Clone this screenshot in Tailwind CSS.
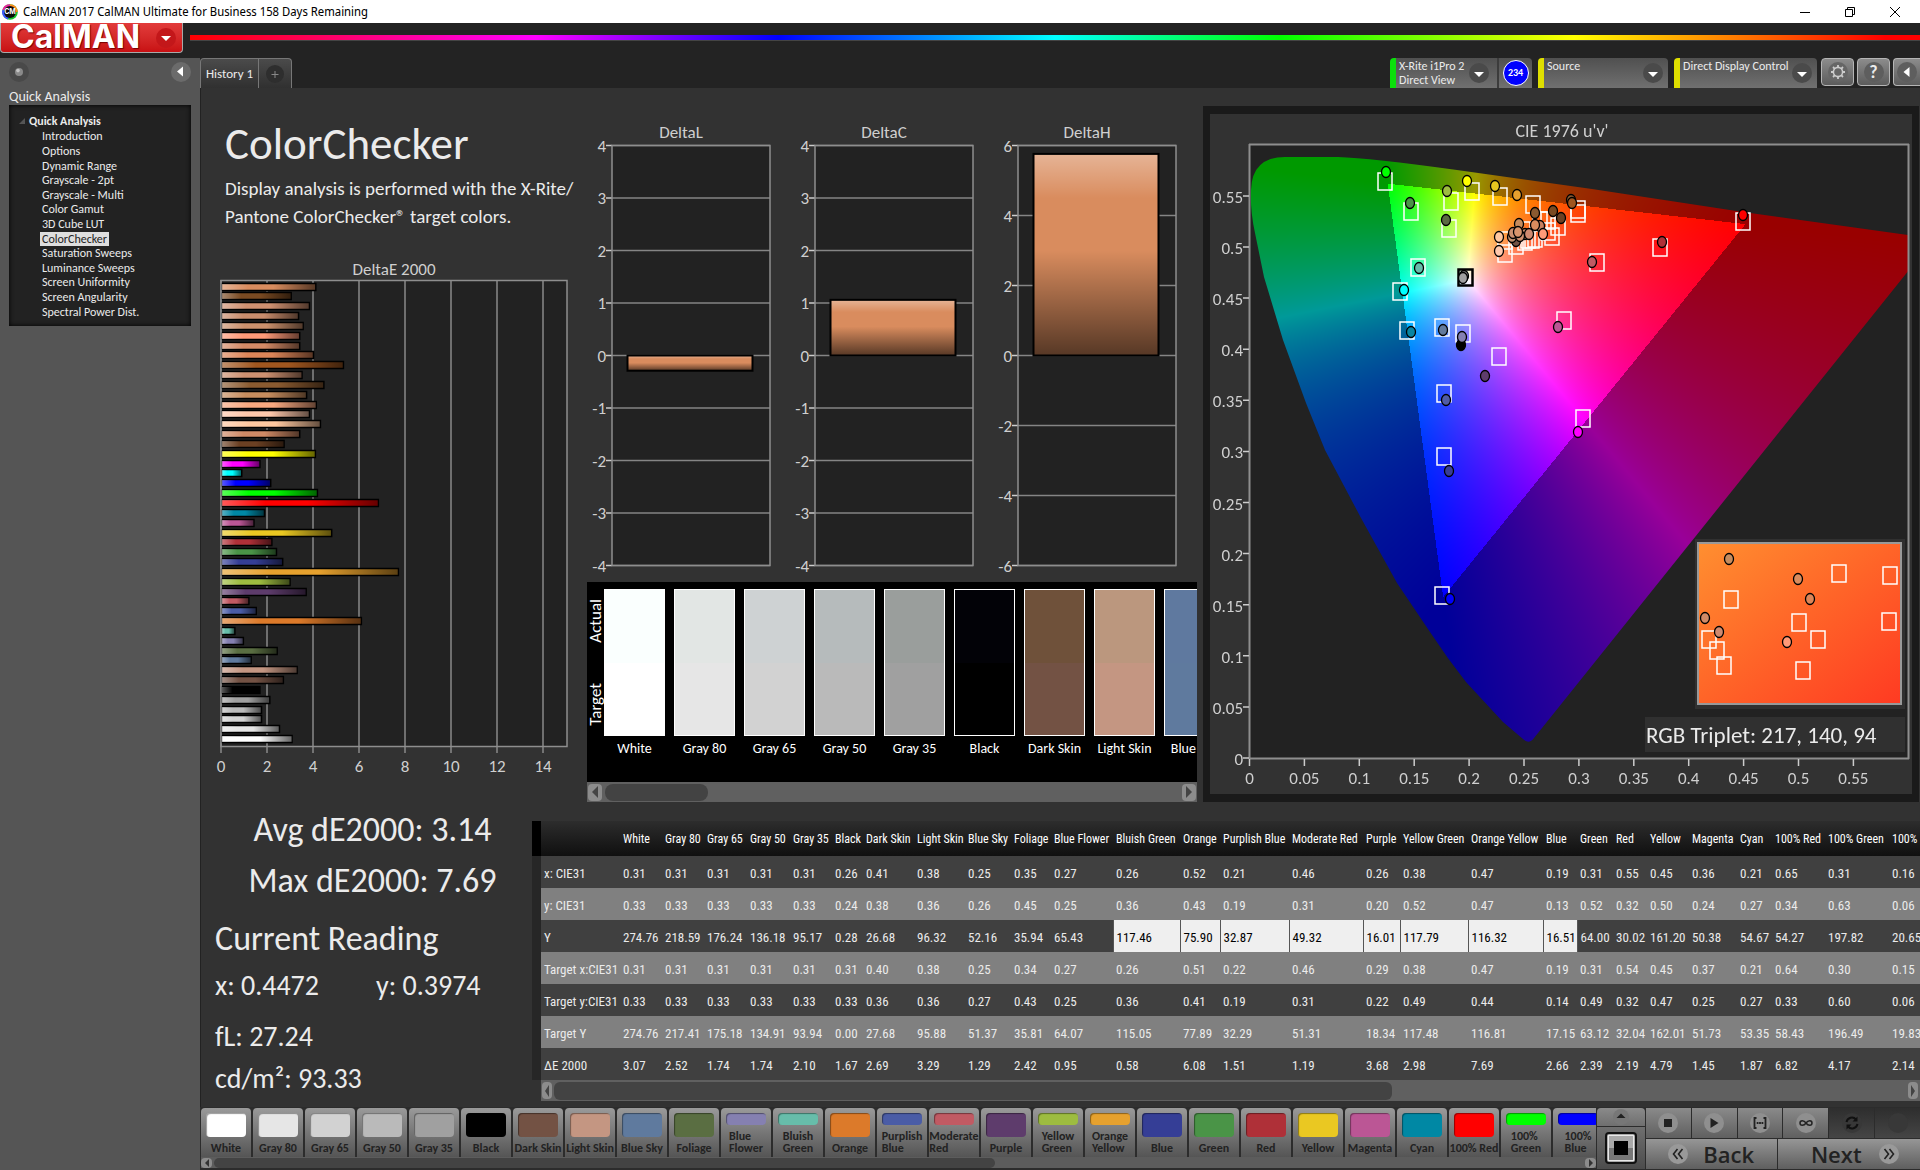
<!DOCTYPE html>
<html lang="en" class="bg-[#323232]">
<head>
  <meta charset="UTF-8" />
  <meta name="viewport" content="width=device-width, initial-scale=1.0"/>
  <title>CalMAN 2017</title>
  <script src="https://cdn.jsdelivr.net/npm/@tailwindcss/browser@4"></script>
</head>
<body class="min-h-screen flex flex-col overflow-hidden bg-[#232323] font-[Carlito,Lato,sans-serif] text-[#ebebeb]">

  <!-- Window title bar -->
  <div class="h-[23px] bg-white text-black flex items-center pl-0.5 pr-5">
    <svg class="size-4" viewBox="0 0 16 16">
      <circle cx="8" cy="8" r="7.8" fill="#18c52c"/>
      <path d="M8 8L.3 6A7.8 7.8 0 0 1 8 .2z" fill="#e8279a"/>
      <path d="M8 8V.2A7.8 7.8 0 0 1 15.8 8z" fill="#ff8a1c"/>
      <path d="M8 8L.3 6A7.8 7.8 0 0 0 6 15.6z" fill="#3a55ff"/>
      <circle cx="8" cy="8" r="6" fill="#0b0b0b"/>
      <text x="8" y="10.4" text-anchor="middle" font-size="7" font-weight="700" font-family="Inter" fill="#fff">CM</text>
    </svg>
    <span class="ml-[5px] text-xs font-['Noto_Sans_Display','Noto_Sans',sans-serif]">CalMAN 2017 CalMAN Ultimate for Business 158 Days Remaining</span>
    <div class="ml-auto flex gap-[35px]">
      <button aria-label="Minimize"><svg class="size-2.5" viewBox="0 0 10 10" stroke="#000" fill="none"><path d="M0 5.5h10"/></svg></button>
      <button aria-label="Restore"><svg class="size-2.5" viewBox="0 0 10 10" stroke="#000" fill="none"><path d="M.5 2.5h7v7h-7zM2.5 2.5v-2h7v7h-2"/></svg></button>
      <button aria-label="Close"><svg class="size-2.5" viewBox="0 0 10 10" stroke="#000" fill="none"><path d="M0 0l10 10M10 0L0 10"/></svg></button>
    </div>
  </div>

  <!-- Brand bar -->
  <div class="h-[35px] flex items-start">
    <button class="w-[183px] h-[30px] flex items-center justify-between pl-2.5 pr-1.5 rounded-b-sm border border-t-0 border-[#a9a9a9] bg-linear-to-b from-[#e23b3b] to-[#c80f12]">
      <span class="text-[32px] leading-7 pb-0.5 font-bold text-white font-[Inter,sans-serif] [text-shadow:1px_1px_1px_#700]">CalMAN</span>
      <svg class="size-5" viewBox="0 0 20 20"><circle cx="10" cy="10" r="10" fill="#c3171a"/><path d="M5 8h10l-5 5z" fill="#fff"/></svg>
    </button>
    <div class="ml-[7px] mt-3 h-1.5 flex-1 border-b border-[#444] bg-[linear-gradient(90deg,#f00_0%,#f0f_20%,#00f_34%,#0ff_50%,#0f0_63%,#ff0_80%,#f00_98%)]"></div>
  </div>

  <div class="flex-1 flex min-w-0">

    <!-- Workflow sidebar -->
    <aside class="w-[200px] shrink-0 bg-[#555] px-[9px]">
      <div class="flex justify-between pt-1">
        <button aria-label="Options"><svg class="size-5" viewBox="0 0 20 20"><circle cx="10" cy="10" r="10" fill="#494949"/><circle cx="10" cy="10" r="4" fill="#8a8a8a"/><circle cx="9" cy="8.6" r="1.8" fill="#c4c4c4"/></svg></button>
        <button aria-label="Collapse"><svg class="size-5" viewBox="0 0 20 20"><circle cx="10" cy="10" r="10" fill="#6b6b6b"/><path d="M12 4.500v10l-6-5z" fill="#fff"/></svg></button>
      </div>
      <h2 class="mt-[7px] text-sm leading-4">Quick Analysis</h2>
      <nav class="h-[221px] bg-[#222] shadow-[inset_0_0_5px_#000] pl-5 pt-2 text-xs leading-[14px]">
        <div class="font-bold h-4 flex items-center gap-1 -ml-2.5"><svg class="size-1.5" viewBox="0 0 6 6"><path d="M6 0v6H0z" fill="#555"/></svg>Quick Analysis</div>
        <ul id="tree" class="grid auto-rows-fr h-[190px] pl-[11px] items-center"></ul>
      </nav>
    </aside>

    <section class="flex-1 min-w-0 flex flex-col">

      <!-- Tabs and devices -->
      <div class="h-[30px] flex overflow-hidden">
        <div class="flex h-full rounded-t-sm border border-b-0 border-[#777] bg-linear-to-b from-[#4b4b4b] to-[#303030]">
          <button class="w-[58px] text-[13px] border-r border-[#777]">History 1</button>
          <button aria-label="New tab" class="w-8 flex items-center justify-center"><svg class="size-[18px]" viewBox="0 0 18 18"><circle cx="9" cy="9" r="9" fill="#2e2e2e"/><path d="M9 6v7M5.500 9.500h7" stroke="#888"/></svg></button>
        </div>
        <div class="ml-auto flex text-xs leading-[14px]">
          <div class="w-[142px] flex items-center border-l-[6px] border-[#0be00b] rounded-t-sm bg-linear-to-b from-[#505050] to-[#707070]">
            <button class="w-[103px] h-full flex items-center justify-between pl-[3px] pr-2 text-left border-r-2 border-[#3c3c3c]">
              <span>X-Rite i1Pro 2<br>Direct View</span>
              <svg class="size-5 shrink-0" viewBox="0 0 20 20"><circle cx="10" cy="10" r="10" fill="#4a4a4a"/><path d="M5 9h10l-5 5z" fill="#fff"/></svg>
            </button>
            <span class="mx-auto size-[26px] rounded-full border border-white bg-[#0000fe] text-white text-[10px] font-bold flex items-center justify-center">234</span>
          </div>
          <button class="ml-1.5 w-[130px] flex justify-between border-l-[6px] border-[#dfdf00] rounded-t-sm bg-linear-to-b from-[#505050] to-[#707070] pl-[3px] pr-[5px] pt-px">
            <span>Source</span>
            <svg class="size-5 mt-1" viewBox="0 0 20 20"><circle cx="10" cy="10" r="10" fill="#4a4a4a"/><path d="M5 9h10l-5 5z" fill="#fff"/></svg>
          </button>
          <button class="ml-1.5 w-[143px] flex justify-between border-l-[6px] border-[#dfdf00] rounded-t-sm bg-linear-to-b from-[#505050] to-[#707070] pl-[3px] pr-[5px] pt-px">
            <span class="whitespace-nowrap">Direct Display Control</span>
            <svg class="size-5 mt-1 shrink-0" viewBox="0 0 20 20"><circle cx="10" cy="10" r="10" fill="#4a4a4a"/><path d="M5 9h10l-5 5z" fill="#fff"/></svg>
          </button>
          <button aria-label="Settings" class="ml-1 w-[33px] h-7 flex items-center justify-center rounded-sm border border-[#b5b5b5] bg-linear-to-b from-[#8c8c8c] to-[#5c5c5c]">
            <svg class="size-5" viewBox="0 0 20 20"><circle cx="10" cy="10" r="10" fill="#666"/><circle cx="10" cy="10" r="4.600" fill="none" stroke="#ccc" stroke-width="1.600"/><path d="M10 3v2.500M10 14.500V17M3 10h2.500M14.500 10H17M5 5l1.800 1.800M13.200 13.200L15 15M15 5l-1.800 1.800M6.800 13.200L5 15" stroke="#ccc" stroke-width="1.800"/></svg>
          </button>
          <button aria-label="Help" class="ml-[3px] w-[33px] h-7 flex items-center justify-center rounded-sm border border-[#b5b5b5] bg-linear-to-b from-[#8c8c8c] to-[#5c5c5c]">
            <span class="size-5 rounded-full bg-[#5e5e5e] text-lg leading-5 font-bold">?</span>
          </button>
          <button aria-label="Hide" class="ml-[3px] w-[27px] h-7 flex items-center justify-center rounded-l-sm border border-r-0 border-[#b5b5b5] bg-linear-to-b from-[#8c8c8c] to-[#5c5c5c]">
            <svg class="size-5" viewBox="0 0 20 20"><circle cx="10" cy="10" r="10" fill="#5e5e5e"/><path d="M12.500 5v10l-6-5z" fill="#fff"/></svg>
          </button>
        </div>
      </div>

      <main class="flex-1 bg-[#323232] border-l border-[#222]">
        <div class="flex">

          <!-- Title and DeltaE -->
          <div class="w-[386px] shrink-0 pt-7">
            <h1 class="pl-6 text-[45px] leading-[56px]">ColorChecker</h1>
            <p class="mt-[3px] pl-6 text-[19px] leading-7 whitespace-nowrap">Display analysis is performed with the X-Rite/<br>Pantone ColorChecker® target colors.</p>
            <svg id="deltaE" class="mt-6 w-full" viewBox="1 0 386 535" font-size="17" fill="#cfcfcf"></svg>
          </div>

          <!-- Delta L / C / H and swatches -->
          <div class="w-[610px] shrink-0 pt-8">
            <div class="flex">
              <svg id="deltaL" class="w-[203px]" viewBox="0 0 203 462" font-size="17" fill="#cfcfcf"></svg>
              <svg id="deltaC" class="w-[203px]" viewBox="0 0 203 462" font-size="17" fill="#cfcfcf"></svg>
              <svg id="deltaH" class="w-[203px]" viewBox="0 0 203 462" font-size="17" fill="#cfcfcf"></svg>
            </div>
            <div class="bg-black flex h-[200px] pt-[7px]">
              <div class="w-[17px] shrink-0 h-[147px] py-2.5 flex flex-col-reverse justify-between items-center text-[17px] leading-4 text-white">
                <span class="[writing-mode:vertical-rl] rotate-180">Target</span>
                <span class="[writing-mode:vertical-rl] rotate-180">Actual</span>
              </div>
              <div id="swatches" class="flex gap-[9px] overflow-hidden text-sm text-white"></div>
            </div>
            <div class="h-5 bg-[#606060] flex items-center gap-[3px] px-px">
              <button aria-label="Scroll left" class="w-3.5 h-[17px] rounded-sm bg-[#8c8c8c] flex items-center justify-center"><svg class="w-1.5 h-3" viewBox="0 0 6 12"><path d="M6 0v12L0 6z" fill="#444"/></svg></button>
              <div class="w-[103px] h-[17px] rounded-lg bg-[#434343]"></div>
              <button aria-label="Scroll right" class="ml-auto w-3.5 h-[17px] rounded-sm bg-[#8c8c8c] flex items-center justify-center"><svg class="w-1.5 h-3" viewBox="0 0 6 12"><path d="M0 0v12l6-6z" fill="#444"/></svg></button>
            </div>
          </div>

          <!-- CIE diagram -->
          <div class="flex-1 min-w-0 pl-1.5 pr-px pt-[18px]">
            <div class="border-x-[7px] border-y-8 border-[#1a1a1a]">
              <svg class="block w-full" viewBox="1210 114 702 680" font-size="17" fill="#cfcfcf">
                <rect x="1250" y="144" width="658" height="614" fill="#222"/>
                <foreignObject x="1250" y="144" width="658" height="614"><canvas id="gamut" width="658" height="614"></canvas></foreignObject>
                <path d="M1249 144.500h660M1908.500 144v615M1249.500 144v615M1249 758.500h660" stroke="#8e8e8e" stroke-width="2" fill="none"/>
                <text x="1562" y="137" text-anchor="middle" font-size="18">CIE 1976 u'v'</text>
                <g id="cieAxes"></g>
                <g id="cieMarks"></g>
                <rect x="1695" y="539" width="210" height="170" fill="#303030"/>
                <rect x="1698" y="543" width="203" height="161" fill="url(#zoomA)" stroke="#999" stroke-width="2"/>
                <g id="zoomMarks"></g>
                <rect x="1645" y="717" width="260" height="35" fill="#303030"/>
                <text x="1646" y="743" font-size="23" fill="#ebebeb">RGB Triplet: 217, 140, 94</text>
              </svg>
            </div>
          </div>
        </div>

        <div class="flex">
          <!-- Readings -->
          <div class="w-[331px] shrink-0 pt-0.5 text-[34px] leading-[51px]">
            <div class="pl-3 text-center">
              <p>Avg dE2000: 3.14</p>
              <p>Max dE2000: 7.69</p>
            </div>
            <div class="pl-3.5">
              <h2 class="mt-3 leading-[42px]">Current Reading</h2>
              <div class="mt-[9px] text-[28px] leading-[34px]">
                <div class="flex"><p class="w-[161px]">x: 0.4472</p><p>y: 0.3974</p></div>
                <p class="mt-[17px]">fL: 27.24</p>
                <p class="mt-2">cd/m²: 93.33</p>
              </div>
            </div>
          </div>

          <!-- Results table -->
          <div class="flex-1 min-w-0 mt-[19px] overflow-hidden">
            <table id="results" class="w-[1408px] table-fixed border-collapse text-left whitespace-nowrap font-['Roboto_Condensed',Roboto,sans-serif] text-[13px]"></table>
            <div class="ml-[9px] h-[21px] bg-[#606060] flex items-center gap-0.5 pl-px">
              <button aria-label="Scroll left" class="w-2.5 h-[17px] rounded-sm bg-[#8c8c8c] flex items-center justify-center"><svg class="w-1 h-3" viewBox="0 0 4 12"><path d="M4 0v12L0 6z" fill="#444"/></svg></button>
              <div class="w-[838px] h-[18px] rounded-md bg-[#434343]"></div>
              <button aria-label="Scroll right" class="ml-auto mr-0.5 w-2.5 h-[17px] rounded-sm bg-[#8c8c8c] flex items-center justify-center"><svg class="w-1 h-3" viewBox="0 0 4 12"><path d="M0 0v12l4-6z" fill="#444"/></svg></button>
            </div>
          </div>
        </div>
      </main>

      <!-- Pattern bar and transport -->
      <footer class="h-[63px] flex bg-[#2c2c2c] pl-px pt-px text-[#222]">
        <div class="flex-1 min-w-0 overflow-hidden">
          <div id="patterns" class="flex gap-0.5 h-[49px]"></div>
          <div class="h-[11px] bg-[#5c5c5c] flex items-center gap-0.5">
            <button aria-label="Scroll left" class="w-[11px] h-2.5 rounded-sm bg-[#8c8c8c] flex items-center justify-center"><svg class="w-1 h-2" viewBox="0 0 4 8"><path d="M4 0v8L0 4z" fill="#333"/></svg></button>
            <div class="w-[781px] h-2.5 rounded-md bg-[#434343]"></div>
            <button aria-label="Scroll right" class="ml-auto w-[11px] h-2.5 rounded-sm bg-[#8c8c8c] flex items-center justify-center"><svg class="w-1 h-2" viewBox="0 0 4 8"><path d="M0 0v8l4-4z" fill="#333"/></svg></button>
          </div>
        </div>
        <div class="ml-px w-12 flex flex-col gap-px">
          <button aria-label="Expand" class="h-[18px] rounded-t-sm bg-linear-to-b from-[#8a8a8a] to-[#6f6f6f] flex items-center justify-center"><svg class="size-4" viewBox="0 0 16 16"><circle cx="8" cy="8" r="8" fill="#777"/><path d="M3.500 9h9L8 4.500z" fill="#222"/></svg></button>
          <button aria-label="Stop all" class="h-[42px] bg-linear-to-b from-[#6f6f6f] to-[#4c4c4c] flex items-center justify-center">
            <svg class="size-8" viewBox="0 0 32 32"><rect x="1" y="1" width="30" height="30" rx="3" fill="#a9a9a9" stroke="#111" stroke-width="2"/><rect x="3.500" y="3.500" width="25" height="25" fill="none" stroke="#e8e8e8"/><path d="M4 16h24v12H4z" fill="#777"/><rect x="9" y="9" width="14" height="14" fill="#000"/></svg>
          </button>
        </div>
        <div class="ml-px w-[274px] flex flex-col gap-px">
          <div id="transport" class="flex gap-px h-[30px]"></div>
          <div class="flex gap-px h-[30px] text-[22px] font-semibold font-['Open_Sans',sans-serif]">
            <button class="flex-1 flex items-center justify-center gap-[15px] bg-linear-to-b from-[#969696] to-[#5f5f5f]">
              <svg class="size-5" viewBox="0 0 20 20"><circle cx="10" cy="10" r="10" fill="#999"/><path d="M9.500 5l-4 5 4 5M14.500 5l-4 5 4 5" stroke="#222" stroke-width="1.600" fill="none"/></svg>Back
            </button>
            <button class="flex-1 flex items-center justify-center gap-[17px] bg-linear-to-b from-[#969696] to-[#5f5f5f] pl-3">
              Next<svg class="size-5" viewBox="0 0 20 20"><circle cx="10" cy="10" r="10" fill="#999"/><path d="M5.500 5l4 5-4 5M10.500 5l4 5-4 5" stroke="#222" stroke-width="1.600" fill="none"/></svg>
            </button>
          </div>
        </div>
      </footer>
    </section>
  </div>

  <svg class="absolute size-0">
    <linearGradient id="sheenX"><stop offset="0" stop-color="#fff" stop-opacity=".35"/><stop offset=".28" stop-color="#fff" stop-opacity="0"/><stop offset=".55" stop-color="#000" stop-opacity="0"/><stop offset="1" stop-color="#000" stop-opacity=".6"/></linearGradient>
    <linearGradient id="sheenY" x2="0" y2="1"><stop offset="0" stop-color="#fff" stop-opacity=".35"/><stop offset=".22" stop-color="#fff" stop-opacity="0"/><stop offset=".48" stop-color="#000" stop-opacity="0"/><stop offset="1" stop-color="#000" stop-opacity=".6"/></linearGradient>
    <linearGradient id="zoomA" x1="0" y1="0" x2="1" y2="1"><stop offset="0" stop-color="#ff8f30"/><stop offset=".5" stop-color="#ff6428"/><stop offset="1" stop-color="#ff3a22"/></linearGradient>
  </svg>

  <script>
    const $ = (id) => document.getElementById(id);

    // workflow tree
    const pages = ["Introduction", "Options", "Dynamic Range", "Grayscale - 2pt", "Grayscale - Multi", "Color Gamut", "3D Cube LUT", "ColorChecker", "Saturation Sweeps", "Luminance Sweeps", "Screen Uniformity", "Screen Angularity", "Spectral Power Dist."];
    $("tree").innerHTML = pages.map(p => `<li><a href="#" class="px-0.5 ${p === "ColorChecker" ? "bg-[#dedede] text-[#222]" : ""}">${p}</a></li>`).join("");

    // DeltaE 2000 bars, top to bottom
    const dE = [
      [4.1, "#d98c5e"], [3.03, "#7a4a22"], [3.82, "#cf9070"], [3.35, "#c98c6c"], [3.55, "#cb906c"], [3.4, "#ff9a78"], [3.4, "#d48a66"], [4, "#dc8558"],
      [5.3, "#a0561f"], [3.5, "#cd9070"], [4.45, "#8a5a30"], [3.7, "#c68c5e"], [4.12, "#f8a880"], [3.82, "#ffc8ac"], [4.3, "#ffc8a0"], [3.4, "#cf8a66"],
      [2.72, "#6b4023"], [4.08, "#ffff00"], [1.67, "#ff00ff"], [.88, "#00ffff"], [2.14, "#0000ff"], [4.17, "#00ff00"], [6.82, "#ff0000"], [1.87, "#0088a4"],
      [1.41, "#bb5695"], [4.79, "#eac822"], [2.19, "#af3038"], [2.39, "#4a9447"], [2.66, "#353e96"], [7.69, "#e6a12e"], [2.98, "#9dbc40"], [3.68, "#5e3c6c"],
      [1.19, "#c15a63"], [1.51, "#4a5ca6"], [6.08, "#dc7a2a"], [.58, "#67bdaa"], [.95, "#8580b1"], [2.42, "#5a6e42"], [1.29, "#5f7a9e"], [3.29, "#c49682"],
      [2.69, "#735244"], [1.67, "#000000"], [2.1, "#a0a0a0"], [1.74, "#bababa"], [1.74, "#d2d2d2"], [2.52, "#e6e6e6"], [3.07, "#ffffff"]
    ];
    let s = `<text x="194" y="20" text-anchor="middle">DeltaE 2000</text><rect x="21" y="25" width="346" height="466" fill="#222"/>`;
    for (let v = 0; v <= 14; v += 2) {
      const x = 21 + v * 23;
      s += `<path d="M${x} 25v473" stroke="#8a8a8a" stroke-width="1.500"/><text x="${x}" y="517" text-anchor="middle">${v}</text>`;
    }
    dE.forEach(([v, c], i) => {
      const y = Math.round(27.500 + i * 9.84), w = v * 23;
      s += `<rect x="21.500" y="${y + .5}" width="${w}" height="7" fill="${c}" stroke="#000" stroke-width="1.500"/><rect x="22" y="${y + 1}" width="${w - 1}" height="6" fill="url(#sheenX)"/>`;
    });
    s += `<rect x="21" y="25.500" width="346" height="466" fill="none" stroke="#8e8e8e" stroke-width="1.500"/>`;
    $("deltaE").innerHTML = s;

    // vertical delta charts
    function deltaChart(id, max, step, v) {
      const sc = 210 / max, mid = 235.5;
      let s = `<text x="94" y="18" text-anchor="middle">${id[0].toUpperCase() + id.slice(1)}</text><rect x="25" y="25" width="158" height="420" fill="#222"/>`;
      for (let t = -max; t <= max; t += step) {
        const y = mid - t * sc;
        s += `<path d="M25 ${y}h158" stroke="#858585" stroke-width="1.500"/><path d="M19 ${y}h6" stroke="#ccc" stroke-width="1.500"/><text x="19" y="${y + 6}" text-anchor="end">${t}</text>`;
      }
      s += `<rect x="25" y="25.500" width="158" height="420" fill="none" stroke="#8e8e8e" stroke-width="1.500"/>`;
      const y = v > 0 ? mid - v * sc : mid, h = Math.abs(v) * sc;
      s += `<rect x="40.500" y="${y}" width="125" height="${h}" fill="#d98c5e"/><rect x="40.500" y="${y}" width="125" height="${h}" fill="url(#sheenY)" stroke="#000" stroke-width="2"/>`;
      $(id).innerHTML = s;
    }
    deltaChart("deltaL", 4, 1, -.29);
    deltaChart("deltaC", 4, 1, 1.06);
    deltaChart("deltaH", 6, 2, 5.76);

    // actual / target swatches
    const swatches = [["White", "#fafffe", "#ffffff"], ["Gray 80", "#e2e6e4", "#e6e6e6"], ["Gray 65", "#ced2d3", "#d2d2d2"], ["Gray 50", "#b6bbbc", "#bababa"], ["Gray 35", "#9a9e9c", "#a0a0a0"], ["Black", "#020207", "#000000"], ["Dark Skin", "#6f513a", "#735244"], ["Light Skin", "#bb977e", "#c49682"], ["Blue Sky", "#5f799f", "#5f7a9e"]];
    $("swatches").innerHTML = swatches.map(([n, a, t]) => `<div class="w-[61px] shrink-0 text-center whitespace-nowrap"><div class="h-[147px] border border-white flex flex-col"><div class="flex-1" style="background:${a}"></div><div class="flex-1" style="background:${t}"></div></div><div class="leading-[26px]">${n}</div></div>`).join("");

    // 1976 UCS diagram: origin 1249.5,758, 1098 px per u', 1022 px per v'
    const cv = $("gamut"), g = cv.getContext("2d"), img = g.createImageData(658, 614);
    for (let py = 0; py < 614; py++) for (let px = 0; px < 658; px++) {
      const u = px / 1098, v = Math.max((614 - py) / 1022, .001);
      const X = 9 * u / (4 * v), Z = (12 - 3 * u - 20 * v) / (4 * v);
      const rgb = [3.2406 * X - 1.5372 - .4986 * Z, -.9689 * X + 1.8758 + .0415 * Z, .0557 * X - .204 + 1.057 * Z];
      // anything outside Rec.709 is clipped and dimmed
      const k = Math.min(...rgb) < 0 ? 153 : 255, m = Math.max(...rgb);
      const o = (py * 658 + px) * 4;
      rgb.forEach((c, i) => img.data[o + i] = k * Math.max(c, 0) / m);
      img.data[o + 3] = 255;
    }
    g.putImageData(img, 0, 0);
    g.globalCompositeOperation = "destination-in";
    g.translate(-1250, -144);
    g.fill(new Path2D("M1534 738Q1529 745 1523 739L1503 722L1466 682Q1447 658 1430 632L1397 583L1361 518L1325 450L1306 403L1283 340L1264 277L1255 233Q1250 210 1251 190Q1252 156 1287 157L1338 157Q1370 158 1457 170L1592 189L1743 212L1908 235L1933 240Z"));

    // axes
    s = "";
    for (let i = 0; i <= 11; i++) {
      const x = 1249.5 + i * 54.9, y = 758 - i * 51.1, label = String(+(i * .05).toFixed(2));
      s += `<path d="M${x} 759v7M1243 ${y}h6" stroke="#ccc" stroke-width="1.500"/><text x="${x}" y="784" text-anchor="middle">${label}</text><text x="1243" y="${y + 7}" text-anchor="end">${label}</text>`;
    }
    $("cieAxes").innerHTML = s;

    const box = ([x, y]) => `<rect x="${x - 7}" y="${y - 8}" width="14" height="17" fill="none" stroke="#fff" stroke-width="1.500"/>`;
    const dot = ([x, y, c]) => `<ellipse cx="${x}" cy="${y}" rx="4.500" ry="5.500" fill="${c}" stroke="#000" stroke-width="1.300"/>`;

    const targets = [[1385, 181], [1411, 211], [1451, 201], [1472, 191], [1500, 196], [1533, 204], [1578, 209], [1578, 213], [1449, 228], [1743, 221], [1660, 247], [1597, 262], [1418, 267], [1400, 291], [1407, 330], [1442, 327], [1463, 333], [1564, 320], [1499, 356], [1444, 393], [1583, 418], [1444, 456], [1442, 595],
      [1505, 253], [1516, 245], [1505, 240], [1525, 241], [1528, 239], [1532, 239], [1535, 238], [1552, 236], [1558, 226], [1548, 220], [1540, 220], [1523, 230], [1548, 231]];
    const readings = [[1386, 172, "#00ff00"], [1410, 203, "#4a9447"], [1447, 191, "#9dbc40"], [1467, 181, "#ffff00"], [1495, 186, "#e7c71f"], [1517, 195, "#e6a12e"], [1446, 220, "#5b6b42"], [1571, 200, "#8a5a30"], [1572, 203, "#a0561f"], [1743, 215, "#ff0000"], [1662, 242, "#af3038"], [1592, 262, "#c15a63"], [1419, 268, "#67bdaa"], [1404, 290, "#00ffff"], [1411, 332, "#0885a1"], [1443, 330, "#627a9d"], [1461, 345, "#000000"], [1462, 337, "#8580b1"], [1464, 276, "#808080"], [1463, 278, "#a0a0a0"], [1558, 327, "#bb5695"], [1485, 376, "#5e3c6c"], [1446, 400, "#505ba6"], [1578, 432, "#ff00ff"], [1449, 471, "#383d96"], [1450, 599, "#0000ff"],
      [1535, 213, "#8a5a30"], [1553, 211, "#7a4a22"], [1561, 218, "#6b4023"], [1516, 241, "#735244"], [1540, 226, "#c98060"], [1519, 224, "#c68c5e"], [1535, 225, "#d98c5e"], [1525, 234, "#c98c6c"], [1529, 234, "#cf8a70"], [1512, 237, "#c09070"], [1513, 233, "#cd9070"], [1520, 236, "#cf9070"], [1518, 232, "#d8946c"], [1543, 234, "#ff9a78"], [1499, 237, "#ffc8a0"], [1499, 251, "#ffc8ac"]];
    $("cieMarks").innerHTML = targets.map(box).join("") + `<rect x="1458.500" y="269.500" width="14" height="16" fill="none" stroke="#000" stroke-width="2.500"/>` + readings.map(dot).join("");
    $("zoomMarks").innerHTML = [[1839, 573], [1890, 575], [1731, 599], [1799, 622], [1889, 621], [1818, 639], [1803, 670], [1709, 639], [1717, 650], [1724, 665]].map(box).join("")
      + [[1729, 559, "#c68c5e"], [1798, 579, "#d98c5e"], [1810, 599, "#dc8558"], [1705, 618, "#d08a66"], [1719, 632, "#cf8a70"], [1787, 642, "#ff9a78"]].map(dot).join("");

    // results table, one column per patch
    const cols = [["White", 42], ["Gray 80", 42], ["Gray 65", 43], ["Gray 50", 43], ["Gray 35", 42], ["Black", 31], ["Dark Skin", 51], ["Light Skin", 51], ["Blue Sky", 46], ["Foliage", 40], ["Blue Flower", 62], ["Bluish Green", 67], ["Orange", 40], ["Purplish Blue", 69], ["Moderate Red", 74], ["Purple", 37], ["Yellow Green", 68], ["Orange Yellow", 75], ["Blue", 34], ["Green", 36], ["Red", 34], ["Yellow", 42], ["Magenta", 48], ["Cyan", 35], ["100% Red", 53], ["100% Green", 64], ["100% Blue", 51]];
    const rows = [
      ["x: CIE31", "0.31 0.31 0.31 0.31 0.31 0.26 0.41 0.38 0.25 0.35 0.27 0.26 0.52 0.21 0.46 0.26 0.38 0.47 0.19 0.31 0.55 0.45 0.36 0.21 0.65 0.31 0.16"],
      ["y: CIE31", "0.33 0.33 0.33 0.33 0.33 0.24 0.38 0.36 0.26 0.45 0.25 0.36 0.43 0.19 0.31 0.20 0.52 0.47 0.13 0.52 0.32 0.50 0.24 0.27 0.34 0.63 0.06"],
      ["Y", "274.76 218.59 176.24 136.18 95.17 0.28 26.68 96.32 52.16 35.94 65.43 117.46 75.90 32.87 49.32 16.01 117.79 116.32 16.51 64.00 30.02 161.20 50.38 54.67 54.27 197.82 20.65"],
      ["Target x:CIE31", "0.31 0.31 0.31 0.31 0.31 0.31 0.40 0.38 0.25 0.34 0.27 0.26 0.51 0.22 0.46 0.29 0.38 0.47 0.19 0.31 0.54 0.45 0.37 0.21 0.64 0.30 0.15"],
      ["Target y:CIE31", "0.33 0.33 0.33 0.33 0.33 0.33 0.36 0.36 0.27 0.43 0.25 0.36 0.41 0.19 0.31 0.22 0.49 0.44 0.14 0.49 0.32 0.47 0.25 0.27 0.33 0.60 0.06"],
      ["Target Y", "274.76 217.41 175.18 134.91 93.94 0.00 27.68 95.88 51.37 35.81 64.07 115.05 77.89 32.29 51.31 18.34 117.48 116.81 17.15 63.12 32.04 162.01 51.73 53.35 58.43 196.49 19.83"],
      ["ΔE 2000", "3.07 2.52 1.74 1.74 2.10 1.67 2.69 3.29 1.29 2.42 0.95 0.58 6.08 1.51 1.19 3.68 2.98 7.69 2.66 2.39 2.19 4.79 1.45 1.87 6.82 4.17 2.14"]
    ];
    $("results").innerHTML = `<colgroup><col style="width:9px"><col style="width:79px">${cols.map(c => `<col style="width:${c[1]}px">`).join("")}</colgroup>`
      + `<thead><tr class="h-[35px] text-xs text-white bg-linear-to-b from-[#2d2d2d] to-[#101010]"><td class="bg-black"></td><td></td>${cols.map(c => `<th scope="col" class="p-0 pl-[3px] font-normal">${c[0]}</th>`).join("")}</tr></thead><tbody>`
      + rows.map(([n, v], r) => `<tr class="h-8 ${r % 2 ? "bg-[#808080]" : "bg-[#404040]"}"><td class="bg-[#262626]"></td><th scope="row" class="p-0 pt-[3px] pl-[3px] font-normal">${n}</th>`
        + v.split(" ").map((t, i) => `<td class="p-0 pt-[3px] pl-[3px] ${r === 2 && i > 10 && i < 19 ? "bg-[#efefef] text-black border-x border-[#555]" : ""}">${t}</td>`).join("") + `</tr>`).join("") + `</tbody>`;

    // pattern buttons
    const patterns = [["White", "#ffffff"], ["Gray 80", "#e6e6e6"], ["Gray 65", "#d2d2d2"], ["Gray 50", "#bababa"], ["Gray 35", "#a0a0a0"], ["Black", "#000000"], ["Dark Skin", "#735244"], ["Light Skin", "#c49682"], ["Blue Sky", "#5f7a9e"], ["Foliage", "#5a6e42"], ["Blue<br>Flower", "#8580b1"], ["Bluish<br>Green", "#67bdaa"], ["Orange", "#dc7a2a"], ["Purplish<br>Blue", "#4a5ca6"], ["Moderate<br>Red", "#c15a63"], ["Purple", "#5e3c6c"], ["Yellow<br>Green", "#9dbc40"], ["Orange<br>Yellow", "#e6a12e"], ["Blue", "#353e96"], ["Green", "#4a9447"], ["Red", "#af3038"], ["Yellow", "#eac822"], ["Magenta", "#bb5695"], ["Cyan", "#0088a4"], ["100% Red", "#ff0000"], ["100%<br>Green", "#00ff00"], ["100%<br>Blue", "#0000ff"]];
    $("patterns").innerHTML = patterns.map(([n, c]) => `<button class="w-[50px] shrink-0 flex flex-col items-center justify-between pt-[5px] pb-[3px] rounded-t-sm bg-linear-to-b from-[#9a9a9a] to-[#555] text-xs leading-3 font-bold text-left whitespace-nowrap"><span class="w-10 ${n.includes("<br>") ? "h-3" : "h-6"} rounded-sm shadow-[inset_1px_1px_1px_#0006]" style="background:${c}"></span><span>${n}</span></button>`).join("");

    // transport controls
    const icons = [
      ["Stop", `<path d="M6 6h8v8H6z" fill="#222"/>`],
      ["Play", `<path d="M6.500 5v10l8-5z" fill="#222"/>`],
      ["Read series", `<path d="M6.500 5h-2v10h2M13.500 5h2v10h-2" stroke="#222" stroke-width="1.800" fill="none"/><path d="M6.700 9h1.800v2H6.700zM9.100 9h1.800v2H9.100zM11.500 9h1.800v2h-1.800z" fill="#222"/>`],
      ["Continuous", `<path d="M10 10c-2-3-6-3-6 0s4 3 6 0 6-3 6 0-4 3-6 0z" stroke="#222" stroke-width="1.500" fill="none"/>`],
      ["Refresh", `<path d="M4.500 9a5.500 5.500 0 0 1 9.500-2.500M15.500 11a5.500 5.500 0 0 1-9.500 2.500" stroke="#111" stroke-width="2" fill="none"/><path d="M15.500 3.500v5h-5zM4.500 16.500v-5h5z" fill="#111"/>`],
      ["Record", ""]
    ];
    $("transport").innerHTML = icons.map(([n, p], i) => `<button aria-label="${n}" class="flex-1 flex items-center justify-center bg-linear-to-b ${i < 4 ? "from-[#8a8a8a] to-[#606060]" : "from-[#2e2e2e] to-[#454545]"}"><svg class="size-5" viewBox="0 0 20 20"><circle cx="10" cy="10" r="10" fill="${i < 4 ? "#8f8f8f" : "#383838"}"/>${p}</svg></button>`).join("");
  </script>
</body>
</html>
